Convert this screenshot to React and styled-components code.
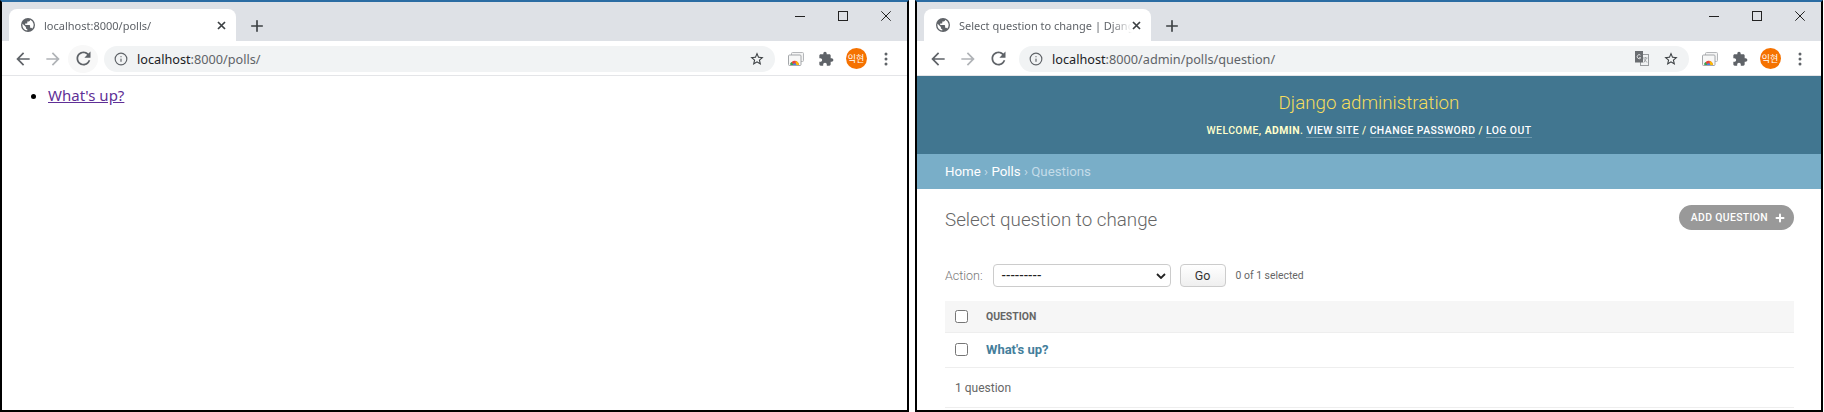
import React from 'react'
import styled, { createGlobalStyle } from 'styled-components'
import { Info, Plus } from 'lucide-react'

const Global = createGlobalStyle`
  html, body { margin: 0; padding: 0; background: #fff; }
  body { width: 1824px; height: 412px; overflow: hidden; font-family: Roboto, "Noto Sans CJK KR", sans-serif; }
`

const Shots = styled.div`
  display: grid;
  grid-template-columns: 909px 908px;
  column-gap: 6px;
  height: 412px;
`

const Browser = styled.div`
  display: flex;
  flex-direction: column;
  height: 412px;
  box-sizing: border-box;
  border: 2px solid #000;
  border-top-color: #2b6ca3;
  overflow: hidden;
  background: #fff;
`

const TabStrip = styled.div`
  display: flex;
  align-items: flex-end;
  height: 39px;
  padding-left: 7px;
  background: #dee1e6;
  flex: none;
`

const Tab = styled.div`
  display: flex;
  align-items: center;
  width: 227px;
  height: 32px;
  box-sizing: border-box;
  padding: 0 10px 0 12px;
  background: #fff;
  border-radius: 8px 8px 0 0;
  color: #5f6368;
`

const TabTitle = styled.span`
  flex: 1;
  min-width: 0;
  margin-left: 9px;
  white-space: nowrap;
  overflow: hidden;
  font-family: "Noto Sans", sans-serif;
  font-size: 11px;
  mask-image: linear-gradient(to right, #000 88%, transparent 100%);
`

const NewTab = styled.div`
  display: flex;
  margin: 0 0 6px 12px;
  color: #3c4043;
`

const WindowButtons = styled.div`
  display: flex;
  align-items: center;
  gap: 33px;
  margin-left: auto;
  margin-right: 16px;
  align-self: flex-start;
  height: 27px;
  color: #222;
`

const Toolbar = styled.div`
  display: flex;
  align-items: center;
  height: 35px;
  box-sizing: border-box;
  padding: 1px 6px 0;
  background: #fff;
  border-bottom: 1px solid #e4e5e8;
  flex: none;
`

const NavButton = styled.div`
  display: flex;
  align-items: center;
  justify-content: center;
  width: 30px;
  height: 28px;
  border-radius: 50%;
  background: ${p => (p.$hover ? '#f8f8f8' : 'transparent')};
  color: ${p => (p.$off ? '#b0b3b7' : '#5f6368')};
`

const Omnibox = styled.div`
  display: flex;
  align-items: center;
  flex: 1;
  height: 26px;
  margin-left: 6px;
  padding: 0 10px;
  background: #f1f3f4;
  border-radius: 13px;
  color: #5f6368;
  font-family: "Noto Sans", sans-serif;
  font-size: 12.7px;
`

const Host = styled.span`
  margin-left: 9px;
  color: #202124;
`

const Path = styled.span`
  color: #5f6368;
`

const OmniIcons = styled.div`
  display: flex;
  align-items: center;
  gap: 14px;
  margin-left: auto;
`

const ToolIcons = styled.div`
  display: grid;
  grid-template-columns: repeat(4, 30px);
  justify-items: center;
  align-items: center;
  margin-left: 6px;
  color: #5f6368;
`

const Avatar = styled.div`
  display: flex;
  align-items: center;
  justify-content: center;
  width: 21px;
  height: 21px;
  border-radius: 50%;
  background: #f57200;
  color: #fff;
  font-family: "Noto Sans CJK KR", sans-serif;
  font-size: 9px;
`

const Page = styled.div`
  flex: 1;
  min-height: 0;
  background: #fff;
`

const PlainList = styled.ul`
  margin: 0;
  padding: 9px 0 0 46px;
  font-family: "Noto Sans", sans-serif;
  font-size: 15px;
  line-height: 20px;
`

const VisitedLink = styled.a`
  color: #5f2f96;
  text-decoration: underline;
`

const AdminHeader = styled.header`
  display: flex;
  flex-direction: column;
  align-items: center;
  height: 78px;
  box-sizing: border-box;
  padding-top: 15px;
  background: #417690;
  color: #ffc;
`

const Brand = styled.h1`
  margin: 0;
  font-size: 18.75px;
  font-weight: 300;
  line-height: 24px;
  color: #f5dd5d;
`

const UserTools = styled.div`
  margin-top: 8px;
  font-size: 10.4px;
  font-weight: 500;
  letter-spacing: 0.45px;
  line-height: 16px;
  text-transform: uppercase;
`

const UserLink = styled.a`
  color: #fff;
  border-bottom: 1px solid rgba(255, 255, 255, 0.25);
`

const Breadcrumbs = styled.nav`
  height: 35px;
  box-sizing: border-box;
  padding: 0 28px;
  background: #79aec8;
  color: #c4dce8;
  font-size: 13.3px;
  line-height: 35px;
`

const Crumb = styled.a`
  color: #fff;
`

const Content = styled.main`
  width: 849px;
  padding-left: 28px;
`

const TitleRow = styled.div`
  display: flex;
  align-items: center;
  justify-content: space-between;
  height: 60px;
`

const PageTitle = styled.h2`
  margin: 2px 0 0;
  font-size: 18.8px;
  font-weight: 300;
  color: #666;
`

const AddButton = styled.a`
  display: flex;
  align-items: center;
  height: 25px;
  margin-bottom: 3px;
  padding: 0 8px 0 12px;
  border-radius: 13px;
  background: #999;
  color: #fff;
  font-size: 10.4px;
  font-weight: 500;
  letter-spacing: 0.35px;
`

const AddIcon = styled(Plus)`
  margin-left: 6px;
`

const ActionRow = styled.div`
  display: flex;
  align-items: center;
  margin-top: 15px;
  height: 23px;
  color: #666;
`

const ActionLabel = styled.span`
  font-size: 12.5px;
  font-weight: 300;
  color: #777;
`

const ActionSelect = styled.div`
  display: flex;
  align-items: center;
  justify-content: space-between;
  width: 178px;
  height: 23px;
  box-sizing: border-box;
  margin-left: 10px;
  padding: 0 4px 0 8px;
  border: 1px solid #ccc;
  border-radius: 4px;
  color: #222;
  font-size: 13px;
  font-weight: 500;
`

const GoButton = styled.div`
  display: flex;
  align-items: center;
  justify-content: center;
  width: 46px;
  height: 23px;
  margin-left: 9px;
  border: 1px solid #ccc;
  border-radius: 4px;
  box-sizing: border-box;
  background: linear-gradient(#fff, #efefef);
  color: #333;
  font-size: 12.5px;
`

const Counter = styled.span`
  margin-left: 10px;
  font-size: 10.4px;
  color: #666;
`

const TableHead = styled.div`
  display: flex;
  align-items: center;
  height: 32px;
  box-sizing: border-box;
  margin-top: 14px;
  padding-left: 10px;
  background: #f6f6f6;
  border-bottom: 1px solid #eee;
  color: #666;
  font-size: 10.4px;
  font-weight: 700;
`

const TableRow = styled.div`
  display: flex;
  align-items: center;
  height: 35px;
  box-sizing: border-box;
  padding: 0 0 2px 10px;
  border-bottom: 1px solid #eee;
`

const Check = styled.span`
  width: 13px;
  height: 13px;
  margin-right: 18px;
  box-sizing: border-box;
  border: 1px solid #767676;
  border-radius: 2.5px;
  background: #fff;
`

const RowLink = styled.a`
  color: #447e9b;
  font-size: 13px;
  font-weight: 700;
`

const Paginator = styled.p`
  margin: 0;
  height: 40px;
  box-sizing: border-box;
  padding-left: 10px;
  border-bottom: 1px solid #eee;
  color: #666;
  font-size: 12px;
  line-height: 40px;
`

function Globe() {
  return (
    <svg width="14" height="14" viewBox="0 0 16 16" style={{ flex: 'none' }}>
      <path
        fill="#5f6368"
        d="M8 0a8 8 0 1 0 0 16A8 8 0 0 0 8 0zM1.6 8c0-.5.1-1 .2-1.4L5.6 10.4v.8c0 .9.7 1.6 1.6 1.6v1.5A6.4 6.4 0 0 1 1.6 8zm11.1 4.3c-.2-.6-.8-1.1-1.5-1.1h-.8V8.8c0-.4-.4-.8-.8-.8H4.8V6.4h1.6c.4 0 .8-.4.8-.8V4h1.6c.9 0 1.6-.7 1.6-1.6V2a6.4 6.4 0 0 1 2.3 10.3z"
      />
    </svg>
  )
}

function MaterialIcon({ size, d, color = 'currentColor' }) {
  return (
    <svg width={size} height={size} viewBox="0 0 24 24" style={{ flex: 'none' }}>
      <path fill={color} d={d} />
    </svg>
  )
}

const ICON_BACK = 'M20 11H7.83l5.59-5.59L12 4l-8 8 8 8 1.41-1.41L7.83 13H20v-2z'
const ICON_FORWARD = 'M4 11h12.17l-5.59-5.59L12 4l8 8-8 8-1.41-1.41L16.17 13H4v-2z'
const ICON_RELOAD = 'M17.65 6.35C16.2 4.9 14.21 4 12 4c-4.42 0-7.99 3.58-7.99 8s3.57 8 7.99 8c3.73 0 6.84-2.55 7.73-6h-2.08c-.82 2.33-3.04 4-5.65 4-3.31 0-6-2.69-6-6s2.69-6 6-6c1.66 0 3.14.69 4.22 1.78L13 11h7V4l-2.35 2.35z'
const ICON_STAR = 'M22 9.24l-7.19-.62L12 2 9.19 8.63 2 9.24l5.46 4.73L5.82 21 12 17.27 18.18 21l-1.63-7.03L22 9.24zM12 15.4l-3.76 2.27 1-4.28-3.32-2.88 4.38-.38L12 6.1l1.71 4.04 4.38.38-3.32 2.88 1 4.28L12 15.4z'
const ICON_PUZZLE = 'M20.5 11H19V7c0-1.1-.9-2-2-2h-4V3.5C13 2.12 11.88 1 10.5 1S8 2.12 8 3.5V5H4c-1.1 0-1.99.9-1.99 2v3.8H3.5c1.49 0 2.7 1.21 2.7 2.7s-1.21 2.7-2.7 2.7H2V20c0 1.1.9 2 2 2h3.8v-1.5c0-1.49 1.21-2.7 2.7-2.7 1.49 0 2.7 1.21 2.7 2.7V22H17c1.1 0 2-.9 2-2v-4h1.5c1.38 0 2.5-1.12 2.5-2.5S21.88 11 20.5 11z'

function CastIcon() {
  return (
    <svg width="16" height="14" viewBox="0 0 16 14">
      <rect x="3.5" y="0.5" width="12" height="9" rx="1" fill="#f4f4f4" stroke="#b4b6b9" />
      <rect x="0.5" y="3" width="12.5" height="10.5" rx="1" fill="#f7f7f7" stroke="#a4a7aa" />
      <path d="M2.5 13a4.2 4.2 0 0 1 8.4 0z" fill="#e8453c" />
      <path d="M7.5 9a4.2 4.2 0 0 1 3.4 4H8z" fill="#fbbc05" />
      <path d="M2.5 13a2.2 2.2 0 0 1 1-3l2 3z" fill="#34a853" />
      <path d="M5 13a1.7 1.7 0 0 1 3.4 0z" fill="#4285f4" />
    </svg>
  )
}

function TranslateIcon() {
  return (
    <svg width="14" height="15" viewBox="0 0 14 15">
      <rect x="5.5" y="3.5" width="8" height="11" fill="#f1f3f4" stroke="#9a9da0" />
      <path d="M0 0h8v11.5H0z" fill="#6a6d71" />
      <path d="M5.5 4.2a2 2 0 1 0 .3 2.6H4" fill="none" stroke="#dfe0e2" strokeWidth="1" />
      <path d="M8 7h4.5M10.5 6.2v.8M8.8 11.5l2.6-4M9 8.2l3 3.3" fill="none" stroke="#8a8d90" strokeWidth=".8" />
    </svg>
  )
}

function Dots() {
  return (
    <svg width="4" height="14" viewBox="0 0 4 14">
      <circle cx="2" cy="2" r="1.5" fill="#5f6368" />
      <circle cx="2" cy="7" r="1.5" fill="#5f6368" />
      <circle cx="2" cy="12" r="1.5" fill="#5f6368" />
    </svg>
  )
}

function WinMin() {
  return <svg width="10" height="10" viewBox="0 0 10 10"><path d="M0 5.5h10" stroke="currentColor" /></svg>
}

function WinMax() {
  return <svg width="10" height="10" viewBox="0 0 10 10"><rect x=".5" y=".5" width="9" height="9" fill="none" stroke="currentColor" /></svg>
}

function WinClose() {
  return <svg width="10" height="10" viewBox="0 0 10 10"><path d="M.3.3l9.4 9.4M9.7.3L.3 9.7" stroke="currentColor" /></svg>
}

function TabClose() {
  return <svg width="9" height="9" viewBox="0 0 9 9" style={{ flex: 'none' }}><path d="M1 1l7 7M8 1L1 8" stroke="#3c4043" strokeWidth="1.7" /></svg>
}

function Chrome({ title, host, path, translate, hover, children }) {
  return (
    <Browser>
      <TabStrip>
        <Tab>
          <Globe />
          <TabTitle>{title}</TabTitle>
          <TabClose />
        </Tab>
        <NewTab><Plus size={18} strokeWidth={2.2} /></NewTab>
        <WindowButtons>
          <WinMin />
          <WinMax />
          <WinClose />
        </WindowButtons>
      </TabStrip>
      <Toolbar>
        <NavButton><MaterialIcon size={20} d={ICON_BACK} /></NavButton>
        <NavButton $off><MaterialIcon size={20} d={ICON_FORWARD} /></NavButton>
        <NavButton $hover={hover}><MaterialIcon size={21} d={ICON_RELOAD} /></NavButton>
        <Omnibox>
          <Info size={14} strokeWidth={2} />
          <Host>{host}</Host>
          <Path>{path}</Path>
          <OmniIcons>
            {translate && <TranslateIcon />}
            <MaterialIcon size={16} d={ICON_STAR} color="#3c4043" />
          </OmniIcons>
        </Omnibox>
        <ToolIcons>
          <CastIcon />
          <MaterialIcon size={16} d={ICON_PUZZLE} />
          <Avatar>익현</Avatar>
          <Dots />
        </ToolIcons>
      </Toolbar>
      <Page>{children}</Page>
    </Browser>
  )
}

export default function App() {
  return (
    <>
      <Global />
      <Shots>
        <Chrome title="localhost:8000/polls/" host="localhost" path=":8000/polls/" hover>
          <PlainList>
            <li><VisitedLink href="#">What's up?</VisitedLink></li>
          </PlainList>
        </Chrome>
        <Chrome title="Select question to change | Django site admin" host="localhost" path=":8000/admin/polls/question/" translate>
          <AdminHeader>
            <Brand>Django administration</Brand>
            <UserTools>
              Welcome, <strong>admin</strong>. <UserLink>View site</UserLink> / <UserLink>Change password</UserLink> / <UserLink>Log out</UserLink>
            </UserTools>
          </AdminHeader>
          <Breadcrumbs>
            <Crumb>Home</Crumb> › <Crumb>Polls</Crumb> › Questions
          </Breadcrumbs>
          <Content>
            <TitleRow>
              <PageTitle>Select question to change</PageTitle>
              <AddButton>ADD QUESTION <AddIcon size={12} strokeWidth={4} /></AddButton>
            </TitleRow>
            <ActionRow>
              <ActionLabel>Action:</ActionLabel>
              <ActionSelect>---------<svg width="10" height="6" viewBox="0 0 10 6"><path d="M1 1l4 4 4-4" fill="none" stroke="#222" strokeWidth="1.8" /></svg></ActionSelect>
              <GoButton>Go</GoButton>
              <Counter>0 of 1 selected</Counter>
            </ActionRow>
            <TableHead><Check />QUESTION</TableHead>
            <TableRow><Check /><RowLink>What's up?</RowLink></TableRow>
            <Paginator>1 question</Paginator>
          </Content>
        </Chrome>
      </Shots>
    </>
  )
}
